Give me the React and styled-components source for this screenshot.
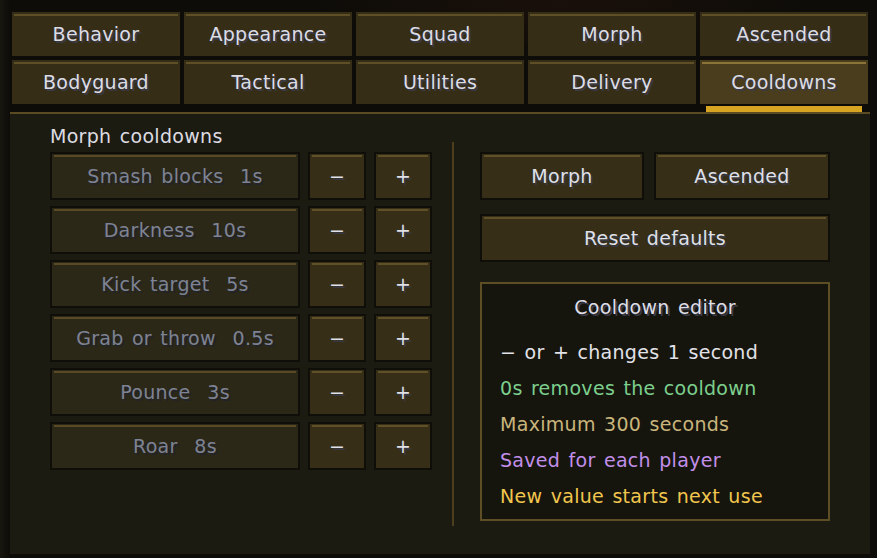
import React from 'react'
import styled, { createGlobalStyle } from 'styled-components'

const GlobalStyle = createGlobalStyle`
  html, body {
    margin: 0;
    padding: 0;
    background: #0c0b08;
  }
  * {
    box-sizing: border-box;
  }
`

const tabs = [
  'Behavior',
  'Appearance',
  'Squad',
  'Morph',
  'Ascended',
  'Bodyguard',
  'Tactical',
  'Utilities',
  'Delivery',
  'Cooldowns',
]

const cooldowns = [
  'Smash blocks  1s',
  'Darkness  10s',
  'Kick target  5s',
  'Grab or throw  0.5s',
  'Pounce  3s',
  'Roar  8s',
]

const notes = [
  { text: '− or + changes 1 second', color: '#e2e2e8' },
  { text: '0s removes the cooldown', color: '#7ccf8e' },
  { text: 'Maximum 300 seconds', color: '#c9b57c' },
  { text: 'Saved for each player', color: '#c18fea' },
  { text: 'New value starts next use', color: '#f1c64e' },
]

const accent = (c) => `linear-gradient(${c}, ${c}) no-repeat 2px 1px / calc(100% - 4px) 2px`

const Screen = styled.div`
  width: 877px;
  height: 558px;
  overflow: hidden;
  background:
    radial-gradient(ellipse 260px 60px at 560px 0px, rgba(50, 22, 14, 0.35), transparent),
    linear-gradient(90deg, #17160f 0px, #0d0c08 10px, #0d0c08 100%);
  font-family: 'DejaVu Sans', 'Liberation Sans', sans-serif;
  font-size: 19px;
  letter-spacing: 0.3px;
  word-spacing: 2px;
  color: #dedee6;
`

const TabGrid = styled.div`
  display: grid;
  grid-template-columns: repeat(5, 168px);
  grid-auto-rows: 44px;
  gap: 4px;
  padding: 12px 0 0 12px;
`

const Tab = styled.div`
  position: relative;
  display: flex;
  align-items: center;
  justify-content: center;
  line-height: 20px;
  background: ${(p) => (p.$active ? accent('#8a7437') : accent('#5f4f27'))},
    ${(p) => (p.$active ? '#4a3d1e' : '#362d17')};
  background-position: 2px 2px, 0 0;
  color: #dcdde6;
  text-shadow: 2px 2px 0 #3a3a46;

  &::after {
    content: '';
    display: ${(p) => (p.$active ? 'block' : 'none')};
    position: absolute;
    left: 6px;
    right: 6px;
    bottom: -8px;
    height: 6px;
    background: #d8a523;
  }
`

const Panel = styled.div`
  margin: 8px 0 0 10px;
  width: 860px;
  height: 442px;
  background: #1c1b12;
  border-top: 2px solid #5b4b23;
  display: flex;
  align-items: flex-start;
  padding: 12px 0 0 40px;
`

const LeftCol = styled.div`
  width: 382px;
  display: flex;
  flex-direction: column;
  gap: 6px;
`

const Label = styled.div`
  line-height: 20px;
  color: #dcdce2;
`

const Row = styled.div`
  display: grid;
  grid-template-columns: 250px 58px 58px;
  gap: 8px;
  height: 48px;
`

const Button = styled.div`
  display: flex;
  align-items: center;
  justify-content: center;
  line-height: 20px;
  white-space: pre;
  border: 2px solid #0f0e09;
  background: ${(p) => (p.$disabled ? accent('#594a25') : accent('#5f5028'))},
    ${(p) => (p.$disabled ? '#2c2818' : '#372e18')};
  color: ${(p) => (p.$disabled ? '#7e8393' : '#dfe0e8')};
  text-shadow: 2px 2px 0 ${(p) => (p.$disabled ? '#222328' : '#383842')};
`

const Divider = styled.div`
  width: 2px;
  height: 384px;
  margin: 16px 0 0 20px;
  background: #4d3f1e;
  flex-shrink: 0;
`

const RightCol = styled.div`
  width: 350px;
  margin: 26px 0 0 26px;
  display: flex;
  flex-direction: column;
`

const ModeRow = styled.div`
  display: grid;
  grid-template-columns: 164px 176px;
  gap: 10px;
  height: 48px;
`

const Reset = styled(Button)`
  height: 48px;
  margin-top: 14px;
`

const InfoBox = styled.div`
  margin-top: 20px;
  height: 239px;
  border: 2px solid #5e4e26;
  background: #16150d;
  padding: 13px 0 0 18px;
  display: flex;
  flex-direction: column;
  gap: 16px;
`

const InfoTitle = styled.div`
  line-height: 20px;
  text-align: center;
  margin: 0 0 9px -18px;
  color: #dedee6;
  text-shadow: 2px 2px 0 #3a3a46;
`

const Note = styled.div`
  line-height: 20px;
  color: ${(p) => p.$color};
`

export default function App() {
  return (
    <>
      <GlobalStyle />
      <Screen>
        <TabGrid>
          {tabs.map((t) => (
            <Tab key={t} $active={t === 'Cooldowns'}>
              {t}
            </Tab>
          ))}
        </TabGrid>
        <Panel>
          <LeftCol>
            <Label>Morph cooldowns</Label>
            {cooldowns.map((c) => (
              <Row key={c}>
                <Button $disabled>{c}</Button>
                <Button>−</Button>
                <Button>+</Button>
              </Row>
            ))}
          </LeftCol>
          <Divider />
          <RightCol>
            <ModeRow>
              <Button>Morph</Button>
              <Button>Ascended</Button>
            </ModeRow>
            <Reset>Reset defaults</Reset>
            <InfoBox>
              <InfoTitle>Cooldown editor</InfoTitle>
              {notes.map((n) => (
                <Note key={n.text} $color={n.color}>
                  {n.text}
                </Note>
              ))}
            </InfoBox>
          </RightCol>
        </Panel>
      </Screen>
    </>
  )
}
